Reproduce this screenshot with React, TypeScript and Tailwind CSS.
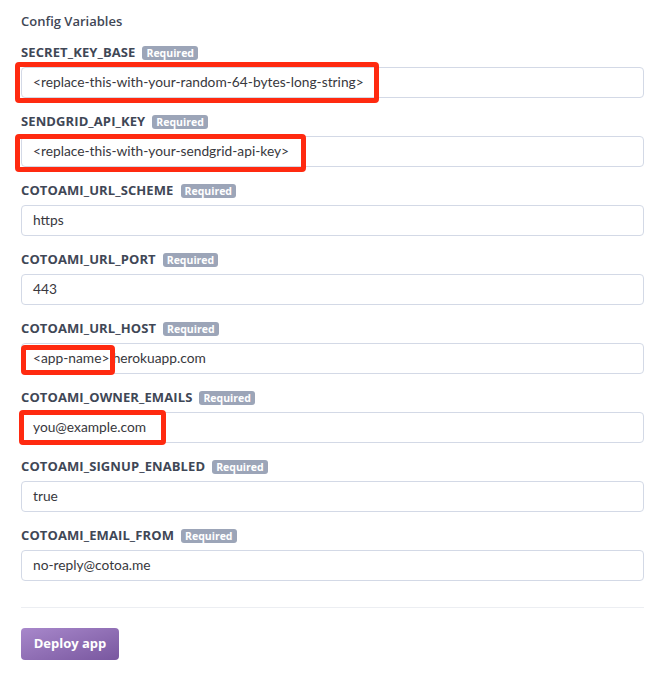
import React from 'react'

const vars = [
  { name: 'SECRET_KEY_BASE', value: '<replace-this-with-your-random-64-bytes-long-string>' },
  { name: 'SENDGRID_API_KEY', value: '<replace-this-with-your-sendgrid-api-key>' },
  { name: 'COTOAMI_URL_SCHEME', value: 'https' },
  { name: 'COTOAMI_URL_PORT', value: '443' },
  { name: 'COTOAMI_URL_HOST', value: '<app-name>.herokuapp.com' },
  { name: 'COTOAMI_OWNER_EMAILS', value: 'you@example.com' },
  { name: 'COTOAMI_SIGNUP_ENABLED', value: 'true' },
  { name: 'COTOAMI_EMAIL_FROM', value: 'no-reply@cotoa.me' },
]

// red annotation boxes drawn over the form
const marks = [
  { left: 15, top: 62, width: 364, height: 41 },
  { left: 15, top: 134, width: 291, height: 38 },
  { left: 21, top: 345, width: 94, height: 30 },
  { left: 19, top: 410, width: 147, height: 35 },
]

export default function App() {
  return (
    <div className="relative w-[666px] h-[685px] bg-white pt-[12px] pl-[21px] pr-[22px] font-['Lato',sans-serif]">
      <h2 className="text-[13px] leading-[18px] font-semibold text-[#3f4756] font-['Open_Sans',sans-serif] mb-[14px]">
        Config Variables
      </h2>

      {vars.map((v) => (
        <div key={v.name} className="mb-[15px]">
          <div className="flex items-center gap-[7px] h-[18px]">
            <span className="text-[13px] font-bold text-[#3f4756] font-['Open_Sans',sans-serif] tracking-[0.1px]">
              {v.name}
            </span>
            <span className="bg-[#9ca5b8] text-white text-[10.5px] leading-[14px] font-bold rounded-[3px] px-[4px] font-['Open_Sans',sans-serif]">
              Required
            </span>
          </div>
          <div className="mt-[5px] h-[31px] border border-[#d3d9e6] rounded-[4px] flex items-center pl-[11px] text-[13.75px] text-[#38383d]">
            {v.value}
          </div>
        </div>
      ))}

      <div className="mt-[26px] border-t border-[#eceef2]" />

      <button className="mt-[20px] w-[98px] h-[32px] rounded-[4px] bg-gradient-to-br from-[#a888cb] to-[#79579f] text-white text-[13px] font-bold font-['Open_Sans',sans-serif]">
        Deploy app
      </button>

      {marks.map((m, i) => (
        <div
          key={i}
          className="absolute border-[5px] border-[#ff2a10] rounded-[4px]"
          style={{ left: m.left, top: m.top, width: m.width, height: m.height }}
        />
      ))}
    </div>
  )
}
